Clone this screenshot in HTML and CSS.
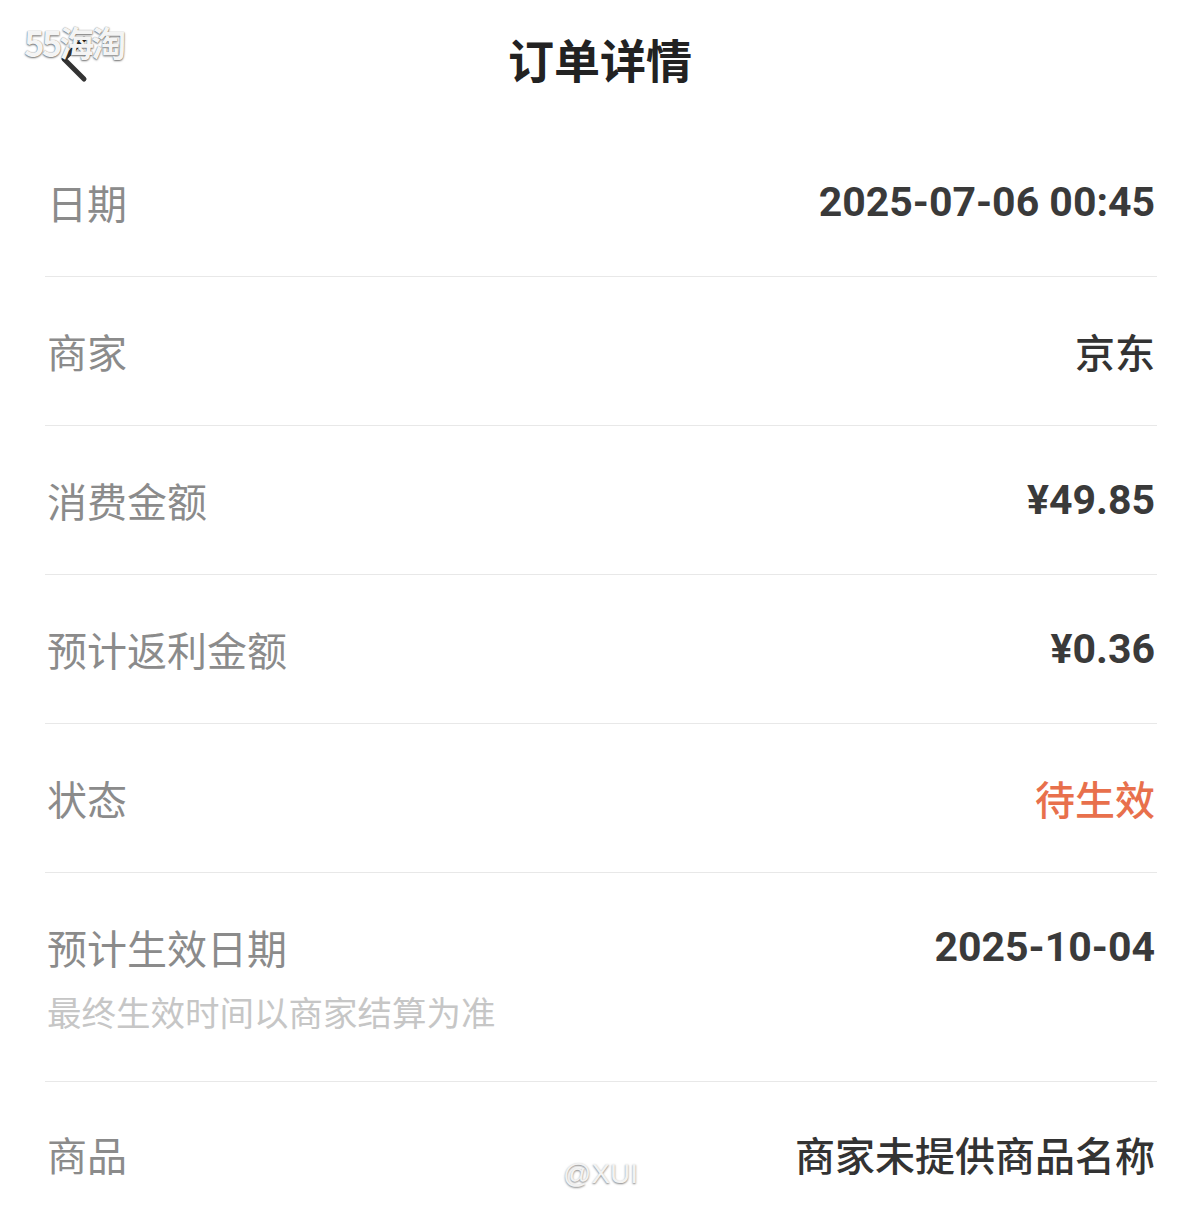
FILE: index.html
```html
<!DOCTYPE html>
<html lang="zh-CN">
<head>
    <meta charset="UTF-8">
    <meta name="viewport" content="width=device-width, initial-scale=1.0">
    <title>订单详情</title>
    <link rel="stylesheet" href="styles.css">
</head>
<body>
    <div class="page">
        <!-- Top bar -->
        <div class="header">
            <span class="back">
                <svg width="34" height="50" viewBox="0 0 34 50">
                    <polyline points="26,4 6,24 26,44" fill="none" stroke="#333" stroke-width="5" stroke-linecap="round" stroke-linejoin="round"/>
                </svg>
            </span>
            <h1 class="title">订单详情</h1>
            <span class="mark-top">55海淘</span>
        </div>

        <div class="detail-list">
            <div class="row">
                <div class="label">日期</div>
                <div class="value">2025-07-06 00:45</div>
            </div>
            <div class="row">
                <div class="label">商家</div>
                <div class="value cjk">京东</div>
            </div>
            <div class="row">
                <div class="label">消费金额</div>
                <div class="value">¥49.85</div>
            </div>
            <div class="row">
                <div class="label">预计返利金额</div>
                <div class="value">¥0.36</div>
            </div>
            <div class="row">
                <div class="label">状态</div>
                <div class="value cjk pending">待生效</div>
            </div>
            <div class="row row-top">
                <div class="label-group">
                    <div class="label">预计生效日期</div>
                    <div class="hint">最终生效时间以商家结算为准</div>
                </div>
                <div class="value">2025-10-04</div>
            </div>
            <div class="row last">
                <div class="label">商品</div>
                <div class="value cjk">商家未提供商品名称</div>
            </div>
        </div>

        <span class="mark-bottom">@XUI</span>
    </div>
</body>
</html>
```

FILE: styles.css
```css
html, body {
    margin: 0;
    padding: 0;
    background: #fff;
}
body {
    font-family: "Noto Sans CJK SC", "Noto Sans", sans-serif;
    color: #333;
}
.page {
    position: relative;
    width: 1200px;
    height: 1223px;
    overflow: hidden;
}
.header {
    position: relative;
    height: 128px;
    display: flex;
    align-items: flex-start;
    justify-content: center;
}
.back {
    position: absolute;
    left: 58px;
    top: 35px;
}
.back svg {
    display: block;
}
.title {
    margin: 28px 0 0;
    font-size: 46px;
    line-height: 60px;
    font-weight: 700;
    color: #222;
}
.mark-top {
    position: absolute;
    left: 24px;
    top: 20px;
    font-family: "Noto Sans CJK SC", sans-serif;
    font-size: 35px;
    line-height: 44px;
    font-weight: 700;
    letter-spacing: -3px;
    color: #f4f4f4;
    text-shadow: 0 1px 2px rgba(0, 0, 0, 0.55), 0 0 1px rgba(0, 0, 0, 0.4);
}
.mark-bottom {
    position: absolute;
    left: 563px;
    top: 1154px;
    font-family: "Liberation Sans", sans-serif;
    font-size: 28px;
    line-height: 40px;
    color: #f2f2f2;
    text-shadow: 0 1px 2px rgba(0, 0, 0, 0.5);
}
.detail-list {
    margin: 0 43px 0 45px;
}
.row {
    display: flex;
    justify-content: space-between;
    align-items: flex-start;
    padding: 54px 2px 53px 0;
    border-bottom: 1px solid #e8e8e8;
}
.row-top {
    padding-bottom: 50px;
}
.row.last {
    border-bottom: none;
    padding-top: 52px;
}
.label {
    font-size: 40px;
    line-height: 41px;
    color: #8b8b8b;
    padding-left: 2px;
}
.hint {
    margin-top: 23px;
    font-size: 34.5px;
    line-height: 40px;
    color: #c6c6c6;
    padding-left: 2px;
}
.value {
    font-family: Roboto, "Noto Sans CJK SC", sans-serif;
    font-size: 41px;
    line-height: 41px;
    font-weight: 700;
    color: #3a3a3a;
}
.value.cjk {
    font-family: "Noto Sans CJK SC", sans-serif;
    font-size: 40px;
    font-weight: 500;
    color: #333;
}
.value.pending {
    color: #e8704c;
}
```
